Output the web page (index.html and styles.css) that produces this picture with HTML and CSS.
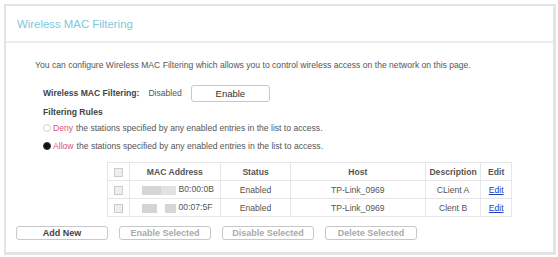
FILE: index.html
```html
<!DOCTYPE html>
<html>
<head>
<meta charset="utf-8">
<link rel="stylesheet" href="styles.css">
</head>
<body>
<div class="panel">
  <div class="header"><span class="title">Wireless MAC Filtering</span></div>
  <div class="content">
    <p class="intro">You can configure Wireless MAC Filtering which allows you to control wireless access on the network on this page.</p>
    <div class="settings">
      <div class="status-row">
        <span class="label">Wireless MAC Filtering:</span>
        <span class="state">Disabled</span>
        <button class="btn enable">Enable</button>
      </div>
      <div class="label rules">Filtering Rules</div>
      <div class="radio-row"><span class="radio"></span><span class="kw">Deny</span> the stations specified by any enabled entries in the list to access.</div>
      <div class="radio-row"><span class="radio checked"></span><span class="kw">Allow</span> the stations specified by any enabled entries in the list to access.</div>
    </div>
    <table class="list">
      <tr>
        <th class="c-chk"><span class="cb"></span></th>
        <th class="c-mac">MAC Address</th>
        <th class="c-status">Status</th>
        <th class="c-host">Host</th>
        <th class="c-desc">Description</th>
        <th class="c-edit">Edit</th>
      </tr>
      <tr>
        <td><span class="cb"></span></td>
        <td class="mac"><span class="blur b1"></span>B0:00:0B</td>
        <td>Enabled</td>
        <td>TP-Link_0969</td>
        <td>CLient A</td>
        <td><a href="#">Edit</a></td>
      </tr>
      <tr>
        <td><span class="cb"></span></td>
        <td class="mac"><span class="blur b2"></span>00:07:5F</td>
        <td>Enabled</td>
        <td>TP-Link_0969</td>
        <td>Clent B</td>
        <td><a href="#">Edit</a></td>
      </tr>
    </table>
  </div>
  <div class="actions">
    <button class="btn">Add New</button>
    <button class="btn dim">Enable Selected</button>
    <button class="btn dim">Disable Selected</button>
    <button class="btn dim">Delete Selected</button>
  </div>
</div>
</body>
</html>
```
FILE: styles.css
```css
html, body { margin: 0; padding: 0; background: #fff; }
body {
  font-family: "Liberation Sans", Arial, sans-serif;
  font-size: 8.6px;
  color: #555;
}
.panel {
  margin: 4px 0 0 4px;
  width: 547px;
  height: 246px;
  border: 2px solid #e4e4e4;
  border-bottom-width: 3px;
  border-right-width: 3px;
  box-sizing: content-box;
}
.header {
  height: 35px;
  border-bottom: 2px solid #ececec;
  display: flex;
  align-items: center;
  padding-left: 11px;
}
.title { color: #7cc8dc; font-size: 11.4px; }
.content { padding-left: 29px; }
.intro { margin: 16px 0 0 0; line-height: 13px; }
.settings { padding-left: 8px; }
.status-row { display: flex; align-items: center; margin-top: 12px; height: 18px; }
.label { font-weight: bold; color: #444; }
.state { margin-left: 9px; }
.btn {
  font-family: "Liberation Sans", Arial, sans-serif;
  background: #fff;
  border: 1px solid #c8c8c8;
  border-radius: 3px;
  color: #333;
  padding: 0;
  height: 17px;
  font-size: 9.5px;
}
.enable { width: 79px; margin-left: 9px; }
.rules { margin-top: 3px; line-height: 14px; }
.radio-row { display: flex; align-items: center; height: 18px; }
.radio {
  width: 6px; height: 6px; border-radius: 50%;
  border: 1px solid #d8d0cc;
  margin: 0 2px 0 0;
}
.radio.checked { background: #111; border-color: #333; }
.kw { color: #e0507c; margin-right: 3px; }
.list {
  border-collapse: collapse;
  margin: 7px 0 0 72px;
  width: 405px;
}
.list tr { height: 18px; }
.list th, .list td {
  border: 1px solid #e6e6e6;
  padding: 0;
  text-align: center;
  color: #555;
}
.list th { font-weight: bold; color: #555; }
.c-chk { width: 21px; }
.c-mac { width: 92px; }
.c-status { width: 70px; }
.c-host { width: 137px; }
.c-desc { width: 55px; }
.c-edit { width: 30px; }
.cb {
  display: inline-block; width: 7px; height: 7px;
  border: 1px solid #ccc; background: #eee; vertical-align: middle;
}
.mac { text-align: left !important; padding-left: 12px !important; }
.blur {
  display: inline-block; width: 34px; height: 9px; vertical-align: middle;
  margin-right: 3px;
}
.b1 { background: linear-gradient(90deg, #d6d6d6 0 55%, #e2e2e2 55% 100%); }
.b2 { background: linear-gradient(90deg, #d4d4d4 0 45%, #fff 45% 68%, #d6d6d6 68% 100%); }
.list a { color: #2040c0; text-decoration: underline; }
.actions { display: flex; gap: 11px; padding: 9px 0 0 10px; }
.actions .btn { width: 92px; height: 14px; font-size: 9px; font-weight: bold; color: #444; }
.actions .btn.dim { color: #aaa; }
```
